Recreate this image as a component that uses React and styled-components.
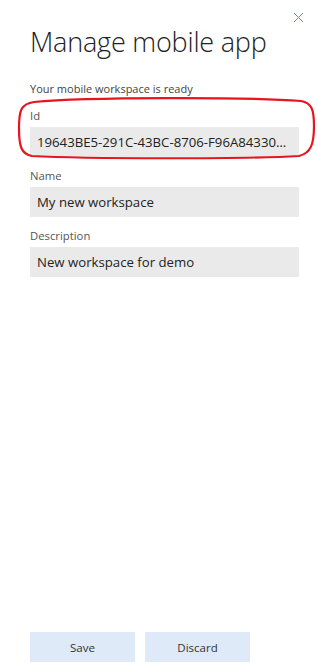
import React from "react";
import styled, { createGlobalStyle } from "styled-components";

const GlobalStyle = createGlobalStyle`
  body {
    margin: 0;
    background: #fff;
    font-family: "Open Sans", "Liberation Sans", sans-serif;
  }
`;

const Panel = styled.div`
  position: relative;
  width: 317px;
  height: 671px;
  box-sizing: border-box;
  padding: 0 18px 9px 30px;
  display: flex;
  flex-direction: column;
  background: #fff;
`;

const CloseButton = styled.button`
  position: absolute;
  top: 12px;
  right: 13px;
  width: 11px;
  height: 11px;
  padding: 0;
  border: none;
  background: none;
  cursor: pointer;
  display: flex;
`;

const Title = styled.h1`
  margin: 24px 0 0 0;
  font-size: 27px;
  font-weight: 300;
  color: #222;
  line-height: 36px;
  letter-spacing: -0.2px;
`;

const Status = styled.p`
  margin: 22px 0 0 0;
  font-size: 11px;
  line-height: 14px;
  color: #444;
`;

const Field = styled.div`
  position: relative;
  display: flex;
  flex-direction: column;
  margin-top: ${(p) => p.gap}px;
`;

const Label = styled.label`
  font-size: 11.3px;
  line-height: 15px;
  color: #555;
  margin-bottom: 4px;
`;

const Input = styled.div`
  height: 30px;
  line-height: 30px;
  background: #eaeaea;
  padding: 0 7px 0 7px;
  font-size: 13.2px;
  color: #222;
  white-space: nowrap;
  overflow: hidden;
  text-overflow: ellipsis;
`;

const Marker = styled.svg`
  position: absolute;
  left: -14px;
  top: -12px;
  width: 300px;
  height: 64px;
  pointer-events: none;
`;

const Spacer = styled.div`
  flex: 1;
`;

const Footer = styled.div`
  display: flex;
  gap: 10px;
`;

const Button = styled.button`
  width: 105px;
  height: 30px;
  border: none;
  background: #deeaf7;
  color: #333;
  font-family: inherit;
  font-size: 11.5px;
  cursor: pointer;
`;

export default function App() {
  return (
    <>
      <GlobalStyle />
      <Panel>
        <CloseButton aria-label="Close">
          <svg width="11" height="11" viewBox="0 0 11 11">
            <path d="M1 1 L10 10 M10 1 L1 10" stroke="#5f9a6a" strokeWidth="1" fill="none" />
          </svg>
        </CloseButton>
        <Title>Manage mobile app</Title>
        <Status>Your mobile workspace is ready</Status>
        <Field gap={12}>
          <Label>Id</Label>
          <Input>19643BE5-291C-43BC-8706-F96A8433012D</Input>
          <Marker viewBox="0 0 300 64">
            <path
              d="M18 6 C70 1 232 1 285 5 C296 7 298 14 298 30 C298 48 295 57 283 60 C232 63 70 63 16 60 C5 58 3 50 3 32 C3 14 5 8 18 6 Z"
              fill="none"
              stroke="#e8141e"
              strokeWidth="2.2"
            />
          </Marker>
        </Field>
        <Field gap={11}>
          <Label>Name</Label>
          <Input>My new workspace</Input>
        </Field>
        <Field gap={11}>
          <Label>Description</Label>
          <Input>New workspace for demo</Input>
        </Field>
        <Spacer />
        <Footer>
          <Button>Save</Button>
          <Button>Discard</Button>
        </Footer>
      </Panel>
    </>
  );
}
